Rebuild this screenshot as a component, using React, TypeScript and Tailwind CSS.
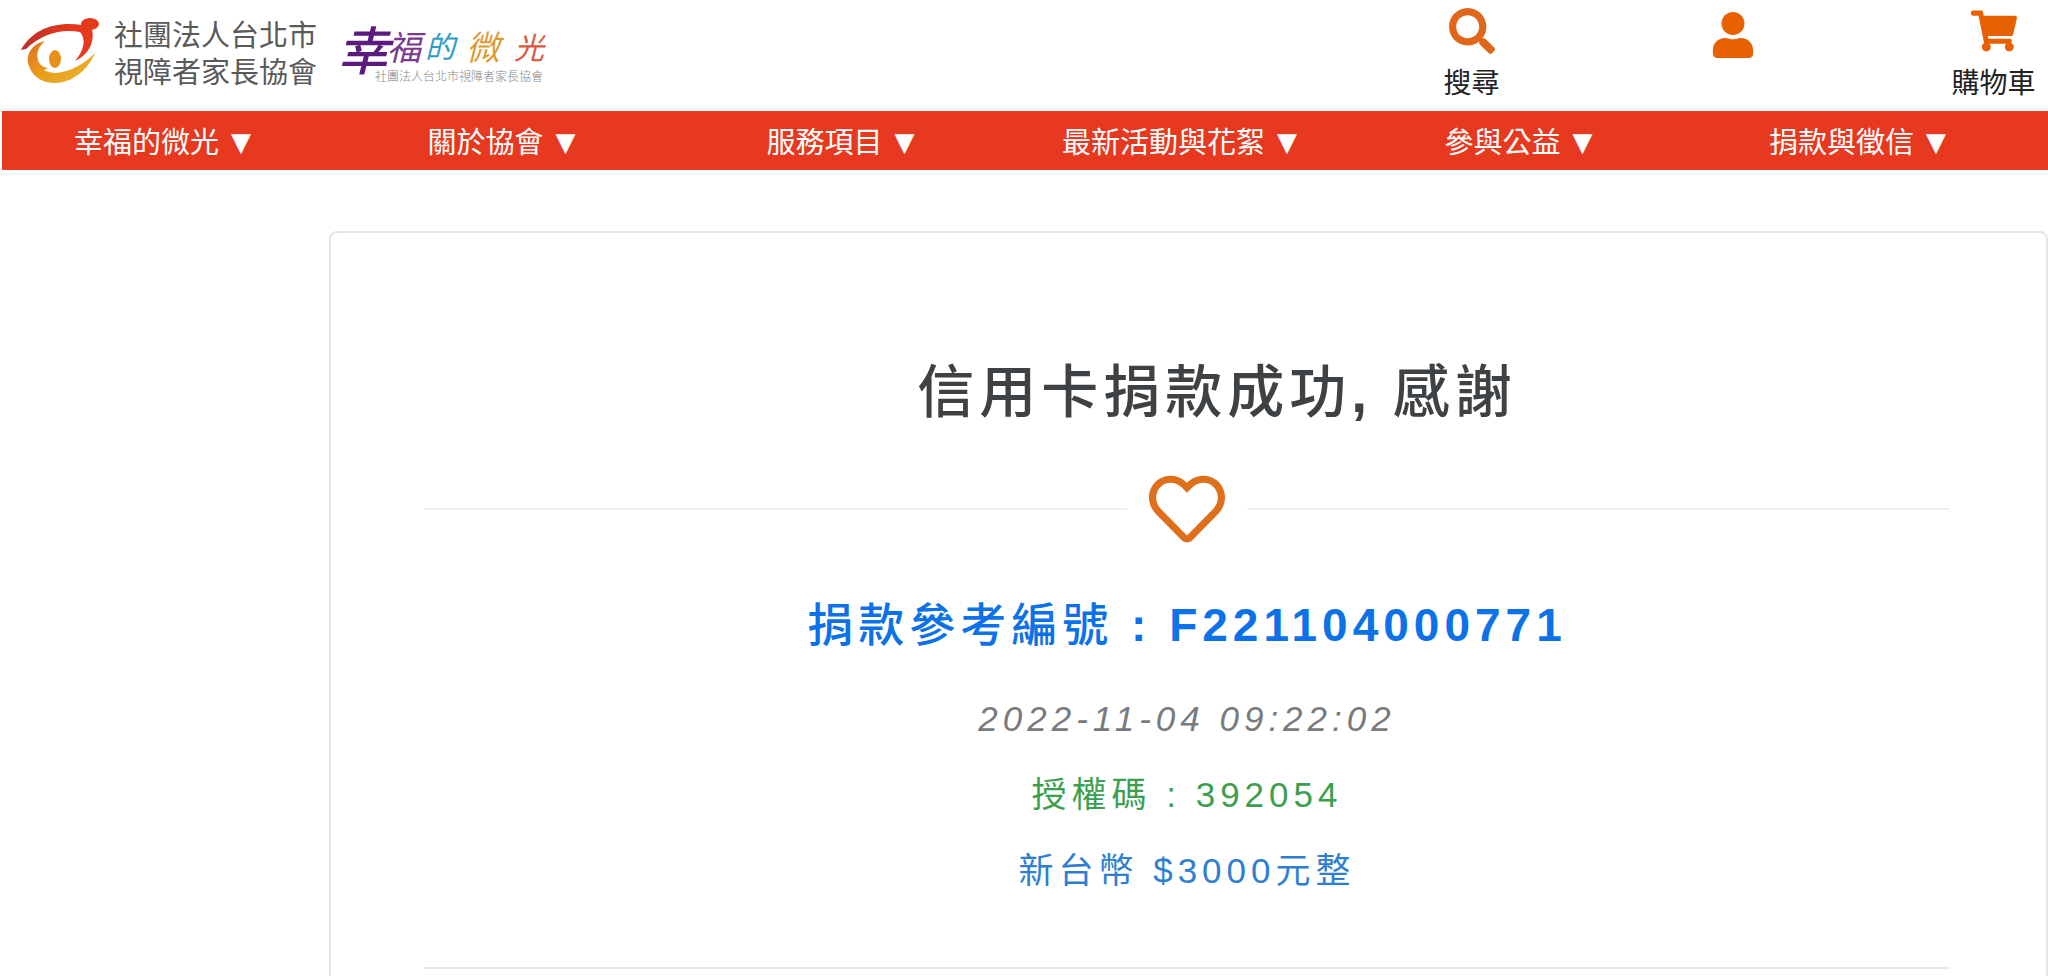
import React from "react";
import { FaRegHeart, FaSearch, FaShoppingCart, FaUser } from "react-icons/fa";

const navItems = [
  "幸福的微光",
  "關於協會",
  "服務項目",
  "最新活動與花絮",
  "參與公益",
  "捐款與徵信",
];

function AssociationLogo() {
  return (
    <a href="#" className="flex items-start gap-[14px]">
      <svg width="80" height="66" viewBox="0 0 80 66" aria-hidden="true">
        <defs>
          <linearGradient id="ring" x1="0" y1="0" x2="1" y2="1">
            <stop offset="0" stopColor="#d9701f" />
            <stop offset="0.5" stopColor="#eb9c1c" />
            <stop offset="1" stopColor="#e6bb35" />
          </linearGradient>
          <linearGradient id="arm" x1="0" y1="0" x2="1" y2="0">
            <stop offset="0" stopColor="#b8322a" />
            <stop offset="0.7" stopColor="#e5391b" />
          </linearGradient>
        </defs>
        <path
          d="M1 32C12 12 34 3 62 7L72 11C75 25 68 37 55 43C63 34 67 22 60 14C40 10 20 17 6 31Z"
          fill="url(#arm)"
        />
        <ellipse cx="70" cy="6" rx="9" ry="6" fill="#e5391b" />
        <path
          d="M25 23C11 26 5 38 9 48C13 60 24 65 34 65C52 65 67 53 75 35C64 46 50 54 36 55C31 55 27 54 24 52L28 50C22 49 19 46 18 42C16 34 19 28 25 23Z"
          fill="url(#ring)"
        />
        <ellipse cx="35" cy="41" rx="6" ry="9" fill="#e8901c" />
      </svg>
      <span className="text-[29px] leading-[37px] text-[#5a5a5a]">
        社團法人台北市
        <br />
        視障者家長協會
      </span>
    </a>
  );
}

function CampaignLogo() {
  return (
    <a href="#">
      <svg width="210" height="80" viewBox="0 0 210 80">
        <g fontStyle="italic">
          <text x="0" y="52" fontSize="52" fontWeight="500" fill="#5b1a7d">
            幸
          </text>
          <text x="50" y="42" fontSize="34" fill="#7b3a8e">
            福
          </text>
          <text x="88" y="40" fontSize="30" fill="#2f9cc8">
            的
          </text>
          <text x="129" y="42" fontSize="34" fill="#dd9a35">
            微
          </text>
          <text x="177" y="41" fontSize="30" fill="#dc5a3c">
            光
          </text>
        </g>
        <text x="38" y="63" fontSize="12" fontWeight="300" fill="#888888">
          社團法人台北市視障者家長協會
        </text>
      </svg>
    </a>
  );
}

function Header() {
  return (
    <header>
      <div className="flex items-start justify-between pl-5 pr-[11px] h-[111px]">
        <div className="flex gap-5 pt-[18px]">
          <AssociationLogo />
          <CampaignLogo />
        </div>
        <div className="flex items-start gap-[174px] pt-2 text-[28px] text-[#222222]">
          <button className="w-[87px] flex flex-col items-center gap-[9px]">
            <FaSearch className="text-[46px] text-[#e0661a]" />
            <span className="leading-[42px]">搜尋</span>
          </button>
          <button
            aria-label="會員"
            className="w-[87px] flex flex-col items-center pt-1"
          >
            <FaUser className="text-[46px] text-[#e86100]" />
          </button>
          <a href="#" className="w-[87px] flex flex-col items-center gap-[9px]">
            <FaShoppingCart className="text-[46px] text-[#e86100]" />
            <span className="leading-[42px] whitespace-nowrap">購物車</span>
          </a>
        </div>
      </div>
      <nav className="ml-[2px] pr-3 grid grid-cols-6 h-[59px] bg-[#e6391f] text-white text-[29px]">
        {navItems.map((item) => (
          <button
            key={item}
            className="flex items-center justify-center gap-3 pt-[6px] pr-[18px] whitespace-nowrap"
          >
            {item}
            <span className="text-[26px] leading-8 pb-1 font-['DejaVu_Sans',sans-serif]">
              ▼
            </span>
          </button>
        ))}
      </nav>
    </header>
  );
}

function DonationResult() {
  return (
    <section className="flex-1 ml-[329px] mt-[61px] pl-[93px] pr-24 pt-[117px] border-2 border-b-0 border-[#e6e6e6] rounded-t-lg text-center tracking-[5px]">
      <h1 className="pl-[60px] text-[57px] leading-[84px] font-bold text-[#3f4245]">
        <span className="font-medium">信用卡捐款成功</span>,{" "}
        <span className="font-medium">感謝</span>
      </h1>
      <div className="flex items-center gap-[22px] mt-[37px]">
        <hr className="flex-1 border-t-2 border-[#f0f0f0]" />
        <FaRegHeart className="text-[76px] text-[#de701c]" />
        <hr className="flex-1 border-t-2 border-[#f0f0f0]" />
      </div>
      <h2 className="mt-[44px] text-[46px] leading-[68px] font-bold text-[#0d72e8]">
        <span className="font-medium">捐款參考編號</span> : F221104000771
      </h2>
      <div className="flex flex-col gap-8 mt-[38px] mb-[74px] text-[35px] leading-[44px]">
        <p className="italic text-[#777b80]">2022-11-04 09:22:02</p>
        <p className="text-[#3c9f4e]">授權碼 : 392054</p>
        <p className="text-[#2f7fd0]">新台幣 $3000元整</p>
      </div>
      <hr className="border-t-2 border-[#e8e8e8]" />
    </section>
  );
}

function App() {
  return (
    <div className="min-h-screen flex flex-col bg-white font-['Liberation_Sans','Noto_Sans_CJK_TC',sans-serif]">
      <Header />
      <main className="flex-1 flex flex-col">
        <DonationResult />
      </main>
    </div>
  );
}

export default App;
